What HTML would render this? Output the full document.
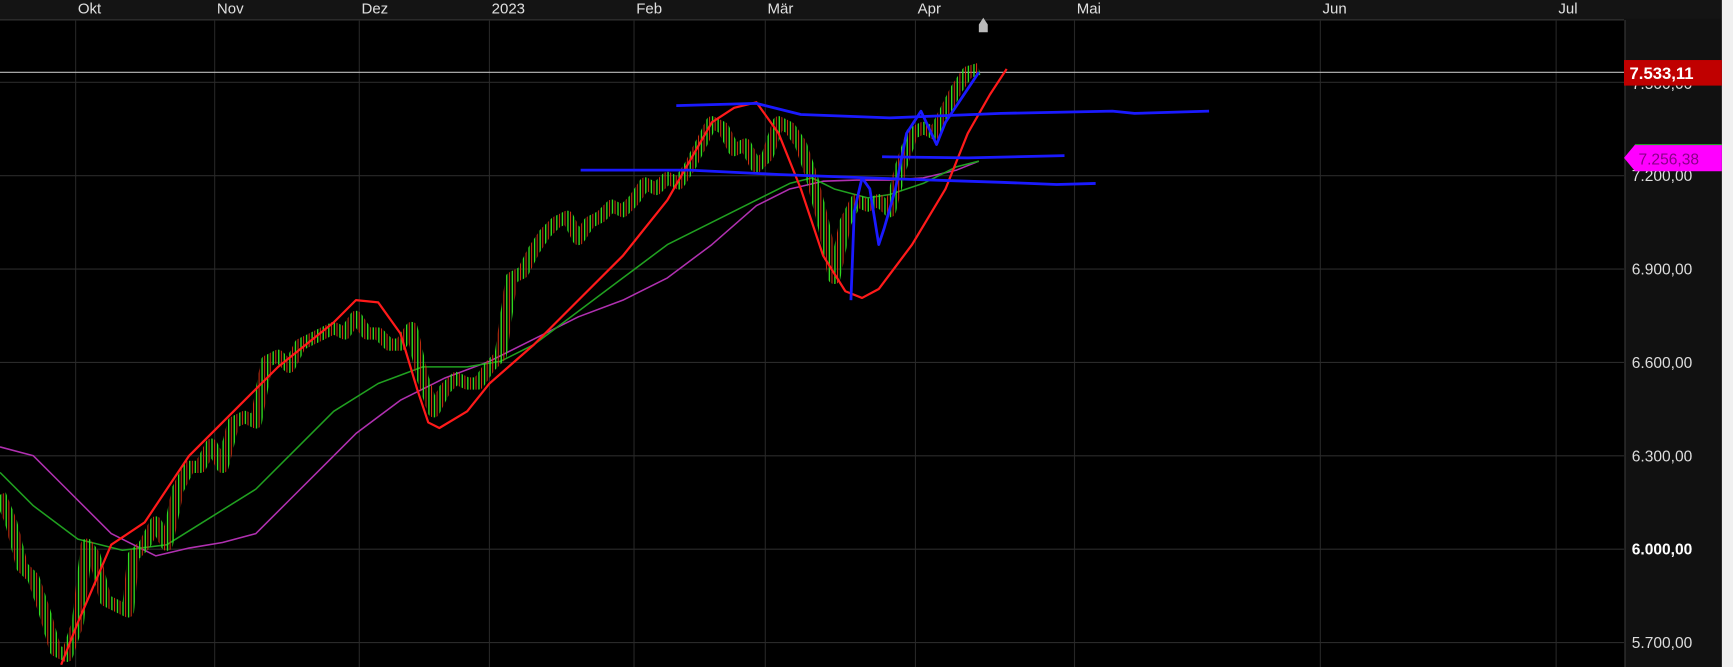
<!DOCTYPE html>
<html><head><meta charset="utf-8"><style>
html,body{margin:0;padding:0;background:#000;width:1733px;height:667px;overflow:hidden}
svg{display:block}
text{font-family:"Liberation Sans",sans-serif}
</style></head><body>
<svg width="1733" height="667" viewBox="0 0 1558 600" preserveAspectRatio="none">
<defs>
<pattern id="bars" patternUnits="userSpaceOnUse" width="5" height="600" x="0" y="0">
<rect x="0" y="0" width="1.2" height="600" fill="#30e020"/>
<rect x="2.5" y="0" width="0.9" height="600" fill="#d83010"/>
</pattern>
</defs>
<rect x="0" y="0" width="1558" height="600" fill="#000"/>
<rect x="0" y="0" width="1548" height="17" fill="#141414"/>
<rect x="0" y="17" width="1548" height="1.5" fill="#2a2a2a"/>
<rect x="1460" y="17" width="88" height="583" fill="#111"/>
<rect x="1548" y="0" width="10" height="600" fill="#f0f0f0"/>
<g stroke="#262626" stroke-width="1">
<line x1="68" y1="18" x2="68" y2="600"/><line x1="193" y1="18" x2="193" y2="600"/>
<line x1="323" y1="18" x2="323" y2="600"/><line x1="440" y1="18" x2="440" y2="600"/>
<line x1="570" y1="18" x2="570" y2="600"/><line x1="688" y1="18" x2="688" y2="600"/>
<line x1="823" y1="18" x2="823" y2="600"/><line x1="966" y1="18" x2="966" y2="600"/>
<line x1="1187" y1="18" x2="1187" y2="600"/><line x1="1399" y1="18" x2="1399" y2="600"/>
<line x1="1461" y1="18" x2="1461" y2="600" stroke="#333"/>
</g>
<g stroke="#2a2a2a" stroke-width="1">
<line x1="0" y1="74" x2="1460" y2="74"/><line x1="0" y1="158" x2="1460" y2="158"/>
<line x1="0" y1="242" x2="1460" y2="242"/><line x1="0" y1="326" x2="1460" y2="326"/>
<line x1="0" y1="410" x2="1460" y2="410"/><line x1="0" y1="494" x2="1460" y2="494"/>
<line x1="0" y1="578" x2="1460" y2="578"/>
</g>
<g fill="#e0e0e0" font-size="13.5">
<text x="70" y="12">Okt</text><text x="195" y="12">Nov</text><text x="325" y="12">Dez</text>
<text x="442" y="12">2023</text><text x="572" y="12">Feb</text><text x="690" y="12">Mär</text>
<text x="825" y="12">Apr</text><text x="968" y="12">Mai</text><text x="1189" y="12">Jun</text>
<text x="1401" y="12">Jul</text>
</g>
<g fill="#ddd" font-size="14">
<text x="1467" y="80">7.500,00</text><text x="1467" y="163">7.200,00</text>
<text x="1467" y="247">6.900,00</text><text x="1467" y="331">6.600,00</text>
<text x="1467" y="415">6.300,00</text><text x="1467" y="499" font-weight="bold" fill="#fff">6.000,00</text>
<text x="1467" y="583">5.700,00</text>
</g>
<line x1="0" y1="65" x2="1460" y2="65" stroke="#bbb" stroke-width="1"/>
<path d="M880 22 L884 16 L888 22 L888 29 L880 29 Z" fill="#bbb"/>
<polyline fill="none" stroke="#b030b0" stroke-width="1.4" stroke-linejoin="round" points="0,402 30,410 60,440 100,480 140,500 170,493 200,488 230,480 260,450 290,420 320,390 360,360 400,340 440,325 480,305 520,285 560,270 600,250 640,220 680,185 710,170 740,163 770,162 800,162 830,160 860,153 880,145"/>
<polyline fill="none" stroke="#20a020" stroke-width="1.4" stroke-linejoin="round" points="0,425 30,455 70,485 110,495 150,490 190,465 230,440 270,400 300,370 340,345 380,330 420,330 450,325 480,310 520,280 560,250 600,220 640,200 680,180 710,165 730,160 750,170 780,178 800,175 830,165 860,150 880,145"/>
<polyline fill="none" stroke="url(#bars)" stroke-width="11" stroke-linejoin="round" points="0,445 10,470 20,510 30,520 40,550 50,585 60,590 70,560 78,490 85,500 95,540 105,545 115,550 120,500 130,490 140,470 150,490 160,440 170,420 180,420 190,400 200,420 210,380 220,375 230,380 240,325 250,320 260,330 270,310 280,305 290,300 300,295 310,300 320,285 330,300 340,300 350,310 360,310 370,295 380,340 390,370 400,350 410,340 420,345 430,345 440,330 450,320 460,250 470,245 480,225 490,210 500,200 510,195 520,215 530,200 540,195 550,185 560,190 570,180 580,165 590,170 600,160 610,165 620,150 630,130 640,110 650,115 660,135 670,130 680,150 690,140 700,110 710,115 720,130 730,160 740,200 750,250 760,200 770,180 780,185 790,180 800,190 810,150 820,120 830,115 840,120 850,100 860,80 870,65 880,62"/>
<polyline fill="none" stroke="#ff1a1a" stroke-width="2" stroke-linejoin="round" points="55,598 70,560 100,490 130,470 170,410 210,370 250,330 300,290 320,270 340,272 360,300 375,350 385,380 395,385 420,370 440,345 480,310 520,270 560,230 600,180 640,110 660,97 680,92 700,120 720,170 740,230 760,262 775,268 790,260 820,220 850,170 870,120 890,85 905,62"/>
<g fill="none" stroke="#1a1aff" stroke-width="2.5" stroke-linejoin="round">
<polyline points="608,95 680,93 720,103 800,106 900,102 1000,100 1020,102 1087,100"/>
<polyline points="522,153 620,153 700,157 780,160 900,164 950,166 985,165"/>
<polyline points="793,141 870,142 957,140"/>
<polyline points="765,270 768,190 775,160 782,170 790,220 795,205 805,170 815,120 828,100 835,115 842,130 850,110 860,95 870,80 880,65"/>
</g>
<rect x="1460" y="54" width="88" height="23" fill="#c00000"/>
<text x="1465" y="71" fill="#fff" font-size="15" font-weight="bold">7.533,11</text>
<path d="M1460 142 L1470 130 L1548 130 L1548 154 L1470 154 Z" fill="#ff00ff"/>
<line x1="1470" y1="130" x2="1548" y2="130" stroke="#20a020" stroke-width="1"/>
<text x="1473" y="148" fill="#880088" font-size="14">7.256,38</text>
</svg>
</body></html>
